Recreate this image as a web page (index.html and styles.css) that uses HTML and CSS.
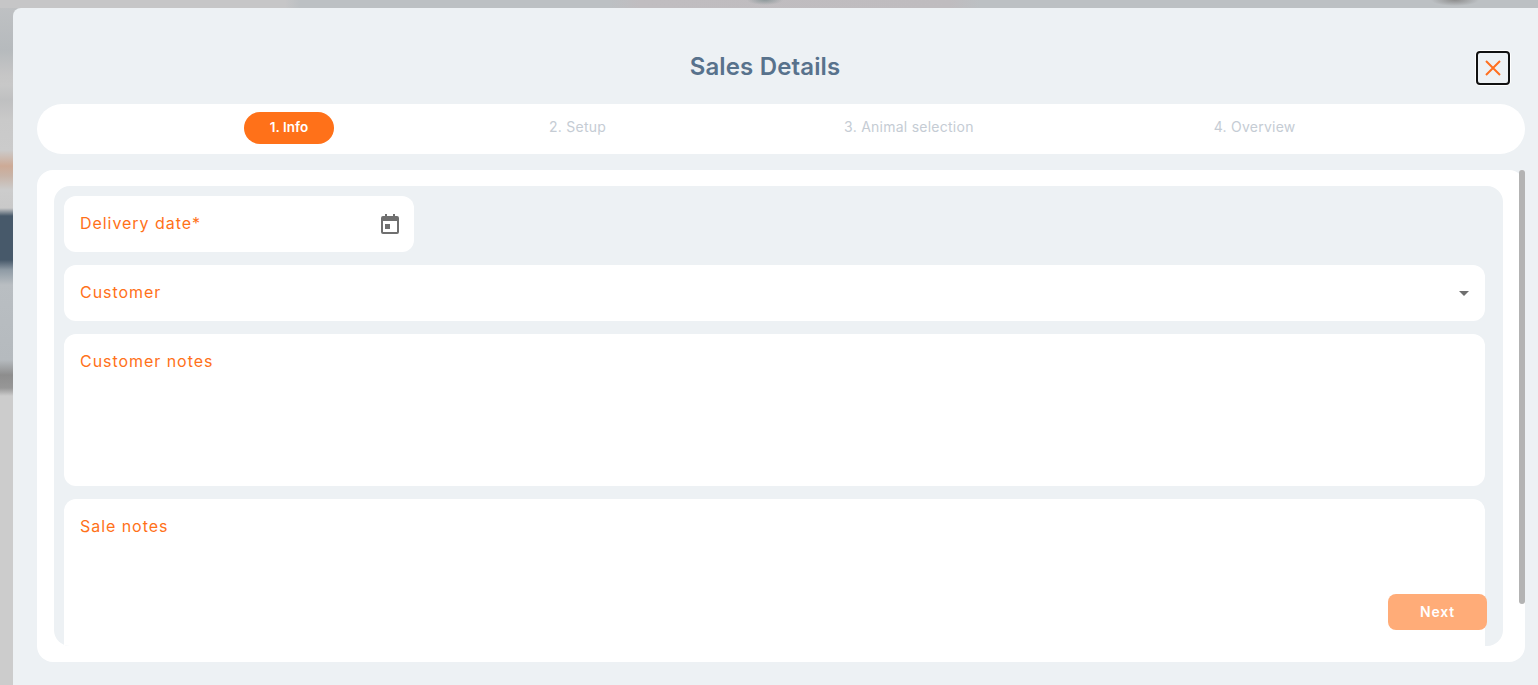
FILE: index.html
```html
<!DOCTYPE html>
<html lang="en">
<head>
<meta charset="utf-8">
<title>Sales Details</title>
<link rel="stylesheet" href="styles.css">
</head>
<body>
<div class="modal">
  <header class="modal-head">
    <h1 class="modal-title">Sales Details</h1>
    <button class="close" type="button" aria-label="Close">
      <svg viewBox="0 0 16 16" width="16" height="16"><path d="M1 1 15 15M15 1 1 15" fill="none" stroke="#ff7020" stroke-width="2"/></svg>
    </button>
  </header>
  <nav class="stepper">
    <span class="step step-1 active">1. Info</span>
    <span class="step step-2">2. Setup</span>
    <span class="step step-3">3. Animal selection</span>
    <span class="step step-4">4. Overview</span>
  </nav>
  <section class="panel">
    <div class="inner">
      <div class="field field-date">
        <span class="label">Delivery date*</span>
        <svg class="cal" viewBox="0 0 18 20" width="18" height="20"><path fill="#6f6f6f" fill-rule="evenodd" d="M4 0h2v2h6V0h2v2h2a2 2 0 0 1 2 2v14a2 2 0 0 1-2 2H2a2 2 0 0 1-2-2V4a2 2 0 0 1 2-2h2V0ZM2 7v11h14V7H2Zm2 3h5v5H4v-5Z"/></svg>
      </div>
      <div class="field field-select">
        <span class="label">Customer</span>
        <span class="caret"></span>
      </div>
      <div class="field field-notes"><span class="label">Customer notes</span></div>
      <div class="field field-sale"><span class="label">Sale notes</span></div>
    </div>
    <div class="scrollbar"></div>
    <button class="next" type="button">Next</button>
  </section>
</div>
</body>
</html>
```
FILE: styles.css
```css
* { box-sizing: border-box; }
html, body { margin: 0; height: 100%; overflow: hidden; }
body {
  height: 685px;
  padding: 8px 0 0 13px;
  font-family: "Inter", "Liberation Sans", sans-serif;
  background:
    radial-gradient(ellipse 18px 5px at 765px 0, #8f9a9c, transparent),
    radial-gradient(ellipse 24px 6px at 1455px 0, #8e8e8e, transparent),
    linear-gradient(90deg, #c6c6c7 0, #c6c6c7 285px, #bcc0c3 300px, #bcc0c3 610px, #c0bdc0 640px, #bfbcbf 950px, #bcc0c3 980px, #bcc0c3 1538px) 0 0 / 100% 8px no-repeat,
    linear-gradient(180deg, #c0c2c4 0, #b6babd 50px, #c6c6c6 75px, #c8c8c8 85px, #bfc0c1 100px, #c9c9c9 120px, #cbcbcb 150px, #cdaa96 166px, #c8b4a8 176px, #cccccc 190px, #c9c9c9 208px, #47596a 216px, #47596a 260px, #8f9ba5 270px, #b9bec2 285px, #b5babe 360px, #8d8d8d 375px, #979797 388px, #cccccc 396px, #cccccc 685px);
}
.modal {
  width: 1525px;
  height: 677px;
  padding: 0 13px 0 24px;
  background: #edf1f4;
  border-radius: 8px 0 0 0;
  display: flex;
  flex-direction: column;
}
.modal-head {
  height: 96px;
  position: relative;
  display: flex;
  justify-content: center;
  align-items: flex-start;
  padding: 43px 32px 0 0;
}
.modal-title {
  margin: 0;
  font-size: 24px;
  line-height: 32px;
  font-weight: 600;
  color: #58728c;
  letter-spacing: 0.15px;
}
.close {
  position: absolute;
  left: 1439px;
  top: 43px;
  width: 34px;
  height: 34px;
  padding: 0;
  background: #edf1f4;
  border: 2px solid #111;
  border-radius: 4px;
  box-shadow: 0 0 0 1px #fff;
  display: flex;
  align-items: center;
  justify-content: center;
}
.stepper {
  height: 50px;
  flex: none;
  padding-bottom: 2px;
  background: #fff;
  border-radius: 25px;
  position: relative;
  display: flex;
  align-items: center;
}
.step {
  font-size: 14px;
  padding-bottom: 4px;
  color: #c5ccd4;
  letter-spacing: 0.25px;
  white-space: nowrap;
}
.step-1 { margin-left: 207px; }
.step-2 { margin-left: 215px; }
.step-3 { margin-left: 238px; }
.step-4 { margin-left: 240px; }
.step.active {
  width: 90px;
  height: 32px;
  padding: 0;
  line-height: 31px;
  text-align: center;
  border-radius: 16px;
  background: #ff7119;
  color: #fff;
  font-size: 13.5px;
  font-weight: 600;
  letter-spacing: 0;
}
.panel {
  position: relative;
  flex: none;
  height: 492px;
  margin-top: 16px;
  background: #fff;
  border-radius: 16px;
  padding: 16px 22px 16px 17px;
}
.inner {
  height: 460px;
  background: #edf1f4;
  border-radius: 16px;
  padding: 10px 18px 0 10px;
  display: flex;
  flex-direction: column;
  gap: 13px;
  overflow: hidden;
}
.field {
  flex: none;
  background: #fff;
  border-radius: 12px;
  padding: 0 16px;
}
.label {
  font-size: 16px;
  line-height: 24px;
  color: #ff7119;
  letter-spacing: 0.95px;
}
.field-date, .field-select {
  height: 56px;
  display: flex;
  align-items: center;
  justify-content: space-between;
}
.field-date .label, .field-select .label { margin-bottom: 2px; }
.field-date { width: 350px; padding-right: 15px; }
.field-select { padding-right: 16px; }
.cal { display: block; }
.caret {
  width: 0;
  height: 0;
  border-left: 5px solid transparent;
  border-right: 5px solid transparent;
  border-top: 5px solid #6f6f6f;
}
.field-notes { height: 152px; padding-top: 15px; }
.field-sale { height: 160px; padding-top: 15px; border-radius: 12px 12px 0 0; }
.scrollbar {
  position: absolute;
  top: 0;
  right: 0;
  width: 6px;
  height: 434px;
  background: #b3b3b3;
  border-radius: 3px;
}
.next {
  position: absolute;
  left: 1351px;
  top: 424px;
  width: 99px;
  height: 36px;
  padding: 0 0 2px;
  border: 0;
  border-radius: 8px;
  background: #ffac78;
  color: #fff;
  font: 600 14px "Inter", "Liberation Sans", sans-serif;
  letter-spacing: 0.8px;
}
```
